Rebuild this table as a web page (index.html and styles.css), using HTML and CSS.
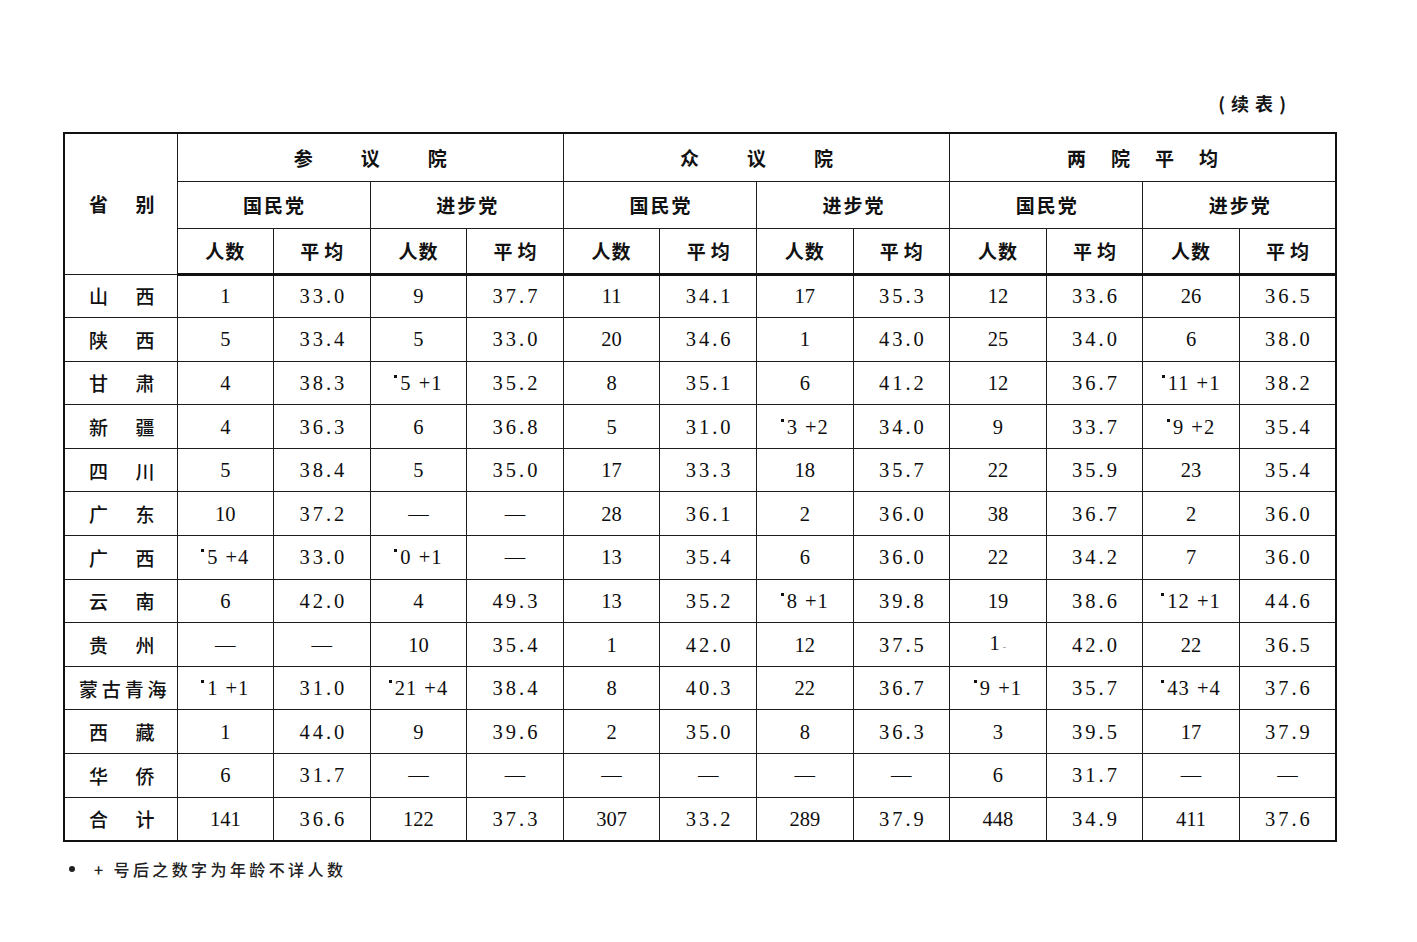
FILE: index.html
```html
<!DOCTYPE html>
<html lang="zh">
<head>
<meta charset="utf-8">
<title>续表</title>
<link rel="stylesheet" href="styles.css">
</head>
<body>
<div class="page">
  <div class="caption">( 续 表 )</div>
  <table class="grid">
    <colgroup>
      <col class="c-name">
      <col><col><col><col><col><col><col><col><col><col><col><col>
    </colgroup>
    <thead>
      <tr class="h1">
        <th rowspan="3" class="corner"><span class="lbl"><i>省</i><i>别</i></span></th>
        <th colspan="4" class="house">参议院</th>
        <th colspan="4" class="house">众议院</th>
        <th colspan="4" class="house house4">两院平均</th>
      </tr>
      <tr class="h2">
        <th colspan="2" class="party">国民党</th>
        <th colspan="2" class="party">进步党</th>
        <th colspan="2" class="party">国民党</th>
        <th colspan="2" class="party">进步党</th>
        <th colspan="2" class="party">国民党</th>
        <th colspan="2" class="party">进步党</th>
      </tr>
      <tr class="h3">
        <th>人数</th><th class="avg">平均</th>
        <th>人数</th><th class="avg">平均</th>
        <th>人数</th><th class="avg">平均</th>
        <th>人数</th><th class="avg">平均</th>
        <th>人数</th><th class="avg">平均</th>
        <th>人数</th><th class="avg">平均</th>
      </tr>
    </thead>
    <tbody>
      <tr><th><span class="lbl"><i>山</i><i>西</i></span></th><td>1</td><td class="a">33.0</td><td>9</td><td class="a">37.7</td><td>11</td><td class="a">34.1</td><td>17</td><td class="a">35.3</td><td>12</td><td class="a">33.6</td><td>26</td><td class="a">36.5</td></tr>
      <tr><th><span class="lbl"><i>陕</i><i>西</i></span></th><td>5</td><td class="a">33.4</td><td>5</td><td class="a">33.0</td><td>20</td><td class="a">34.6</td><td>1</td><td class="a">43.0</td><td>25</td><td class="a">34.0</td><td>6</td><td class="a">38.0</td></tr>
      <tr><th><span class="lbl"><i>甘</i><i>肃</i></span></th><td>4</td><td class="a">38.3</td><td class="p"><span class="mk"></span>5 +1</td><td class="a">35.2</td><td>8</td><td class="a">35.1</td><td>6</td><td class="a">41.2</td><td>12</td><td class="a">36.7</td><td class="p"><span class="mk"></span>11 +1</td><td class="a">38.2</td></tr>
      <tr><th><span class="lbl"><i>新</i><i>疆</i></span></th><td>4</td><td class="a">36.3</td><td>6</td><td class="a">36.8</td><td>5</td><td class="a">31.0</td><td class="p"><span class="mk"></span>3 +2</td><td class="a">34.0</td><td>9</td><td class="a">33.7</td><td class="p"><span class="mk"></span>9 +2</td><td class="a">35.4</td></tr>
      <tr><th><span class="lbl"><i>四</i><i>川</i></span></th><td>5</td><td class="a">38.4</td><td>5</td><td class="a">35.0</td><td>17</td><td class="a">33.3</td><td>18</td><td class="a">35.7</td><td>22</td><td class="a">35.9</td><td>23</td><td class="a">35.4</td></tr>
      <tr><th><span class="lbl"><i>广</i><i>东</i></span></th><td>10</td><td class="a">37.2</td><td>—</td><td>—</td><td>28</td><td class="a">36.1</td><td>2</td><td class="a">36.0</td><td>38</td><td class="a">36.7</td><td>2</td><td class="a">36.0</td></tr>
      <tr><th><span class="lbl"><i>广</i><i>西</i></span></th><td class="p"><span class="mk"></span>5 +4</td><td class="a">33.0</td><td class="p"><span class="mk"></span>0 +1</td><td>—</td><td>13</td><td class="a">35.4</td><td>6</td><td class="a">36.0</td><td>22</td><td class="a">34.2</td><td>7</td><td class="a">36.0</td></tr>
      <tr><th><span class="lbl"><i>云</i><i>南</i></span></th><td>6</td><td class="a">42.0</td><td>4</td><td class="a">49.3</td><td>13</td><td class="a">35.2</td><td class="p"><span class="mk"></span>8 +1</td><td class="a">39.8</td><td>19</td><td class="a">38.6</td><td class="p"><span class="mk"></span>12 +1</td><td class="a">44.6</td></tr>
      <tr><th><span class="lbl"><i>贵</i><i>州</i></span></th><td>—</td><td>—</td><td>10</td><td class="a">35.4</td><td>1</td><td class="a">42.0</td><td>12</td><td class="a">37.5</td><td>1<span class="speck">-</span></td><td class="a">42.0</td><td>22</td><td class="a">36.5</td></tr>
      <tr><th><span class="lbl wide"><i>蒙</i><i>古</i><i>青</i><i>海</i></span></th><td class="p"><span class="mk"></span>1 +1</td><td class="a">31.0</td><td class="p"><span class="mk"></span>21 +4</td><td class="a">38.4</td><td>8</td><td class="a">40.3</td><td>22</td><td class="a">36.7</td><td class="p"><span class="mk"></span>9 +1</td><td class="a">35.7</td><td class="p"><span class="mk"></span>43 +4</td><td class="a">37.6</td></tr>
      <tr><th><span class="lbl"><i>西</i><i>藏</i></span></th><td>1</td><td class="a">44.0</td><td>9</td><td class="a">39.6</td><td>2</td><td class="a">35.0</td><td>8</td><td class="a">36.3</td><td>3</td><td class="a">39.5</td><td>17</td><td class="a">37.9</td></tr>
      <tr><th><span class="lbl"><i>华</i><i>侨</i></span></th><td>6</td><td class="a">31.7</td><td>—</td><td>—</td><td>—</td><td>—</td><td>—</td><td>—</td><td>6</td><td class="a">31.7</td><td>—</td><td>—</td></tr>
      <tr><th><span class="lbl"><i>合</i><i>计</i></span></th><td>141</td><td class="a">36.6</td><td>122</td><td class="a">37.3</td><td>307</td><td class="a">33.2</td><td>289</td><td class="a">37.9</td><td>448</td><td class="a">34.9</td><td>411</td><td class="a">37.6</td></tr>
    </tbody>
  </table>
  <p class="note"><span class="bullet"></span><span class="note-text">+ 号后之数字为年龄不详人数</span></p>
</div>
</body>
</html>
```

FILE: styles.css
```css
html, body {
  margin: 0;
  padding: 0;
  background: #ffffff;
}

body {
  color: #151515;
  font-family: "Liberation Serif", "Noto Sans CJK SC", serif;
}

.page {
  width: 1417px;
  height: 942px;
  padding: 90px 0 0 63px;
  box-sizing: border-box;
}

.caption {
  width: 1274px;
  box-sizing: border-box;
  text-align: right;
  padding-right: 50px;
  height: 30px;
  margin-bottom: 12px;
  font-family: "Noto Sans CJK SC", sans-serif;
  font-weight: 700;
  font-size: 18px;
  line-height: 26px;
  letter-spacing: 1px;
  white-space: pre;
}

.grid {
  width: 1274px;
  border-collapse: collapse;
  table-layout: fixed;
  border: 2.5px solid #111;
}

.c-name {
  width: 113px;
}

.grid th,
.grid td {
  border: 1.5px solid #1c1c1c;
  padding: 0;
  text-align: center;
  vertical-align: middle;
}

.grid thead th {
  font-family: "Noto Sans CJK SC", sans-serif;
  font-weight: 700;
  font-size: 19px;
  color: #111;
}

.h1 { height: 48px; }
.h2 { height: 47px; }
.h3 { height: 46px; }

.h3 th {
  border-bottom: 3px solid #111;
  letter-spacing: 1px;
}

.h3 th.avg {
  letter-spacing: 5px;
  text-indent: 5px;
}

.house {
  letter-spacing: 48px;
  text-indent: 48px;
}

.house4 {
  letter-spacing: 25px;
  text-indent: 25px;
}

.party {
  letter-spacing: 2px;
  text-indent: 2px;
}

.lbl {
  display: flex;
  justify-content: space-between;
  padding: 0 22px 0 24px;
}

.lbl i {
  font-style: normal;
}

.lbl.wide {
  padding: 0 10px 0 14px;
}

.grid tbody tr {
  height: 43.6px;
}

.grid tbody th {
  font-family: "Noto Sans CJK SC", sans-serif;
  font-weight: 500;
  font-size: 19px;
  color: #111;
}

.grid tbody td {
  font-family: "Liberation Serif", serif;
  font-size: 20.5px;
  line-height: 24px;
  color: #0e0e0e;
}

.grid tbody td.a {
  letter-spacing: 3px;
  text-indent: 3px;
}

.grid tbody td.p {
  word-spacing: 1px;
  letter-spacing: 1px;
}

.mk {
  display: inline-block;
  width: 3px;
  height: 3px;
  background: #111;
  vertical-align: 12px;
  margin-right: 3px;
}

.speck {
  font-size: 10px;
  color: #999;
  margin-left: 3px;
}

.note {
  margin: 16px 0 0 4px;
  font-family: "Noto Sans CJK SC", sans-serif;
  font-weight: 500;
  font-size: 16px;
  line-height: 22px;
  color: #222;
  display: flex;
  align-items: center;
}

.bullet {
  display: block;
  width: 6px;
  height: 6px;
  border-radius: 50%;
  background: #222;
  margin: 0 19px 0 2px;
}

.note-text {
  letter-spacing: 3.4px;
}
```
